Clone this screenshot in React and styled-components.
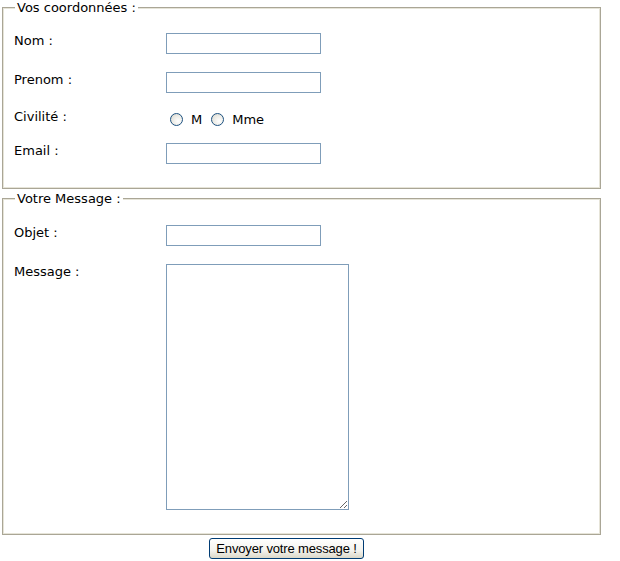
import React from 'react';
import styled, { createGlobalStyle } from 'styled-components';

const GlobalStyle = createGlobalStyle`
  body {
    margin: 0;
    background: #fff;
    font-family: "DejaVu Sans", Verdana, sans-serif;
    font-size: 13px;
    color: #000;
  }
`;

/* Form wrapper */
const Form = styled.form`
  width: 599px;
  margin: 0 2px;
`;

/* XP style fieldset: tan outer line with a lighter inner line */
const Fieldset = styled.fieldset`
  margin: ${(p) => (p.$first ? '0' : '2px')} 0 0;
  padding: ${(p) => p.$top || 18}px 11px 24px;
  border: 1px solid #aaa696;
  box-shadow: inset 1px 1px 0 #e6e4d8, inset -1px -1px 0 #e6e4d8;
  box-sizing: border-box;
`;

const Legend = styled.legend`
  padding: 0 2px;
  margin-left: 1px;
  background: #fff;
  line-height: 15px;
`;

/* One label + field line */
const Row = styled.div`
  display: flex;
  align-items: flex-start;
  margin-bottom: ${(p) => (p.$gap ?? 18)}px;
  &:last-child {
    margin-bottom: 0;
  }
`;

const Label = styled.label`
  width: 152px;
  flex-shrink: 0;
  line-height: 15px;
`;

const TextInput = styled.input`
  width: 155px;
  height: 21px;
  margin: 0;
  padding: 1px 2px;
  border: 1px solid #7f9db9;
  box-sizing: border-box;
  font-family: inherit;
  font-size: 13px;
  outline: none;
`;

const TextArea = styled.textarea`
  width: 183px;
  height: 246px;
  margin: 0;
  padding: 2px;
  border: 1px solid #7f9db9;
  box-sizing: border-box;
  font-family: inherit;
  font-size: 13px;
  outline: none;
`;

const RadioGroup = styled.div`
  display: flex;
  align-items: center;
  margin-top: 3px;
  line-height: 15px;
`;

const RadioLabel = styled.label`
  display: flex;
  align-items: center;
  margin-right: 5px;
`;

/* XP radio button */
const Radio = styled.input.attrs({ type: 'radio' })`
  appearance: none;
  width: 13px;
  height: 13px;
  margin: 0 8px 0 4px;
  border: 1px solid #1c5180;
  border-radius: 50%;
  background: radial-gradient(circle at 65% 65%, #fff 0%, #ebeae4 55%, #d6d2c6 100%);
  box-sizing: border-box;
`;

const Footer = styled.div`
  padding: 3px 0 0 207px;
`;

const SubmitButton = styled.button`
  width: 155px;
  height: 21px;
  padding: 0;
  border: 1px solid #003c74;
  border-radius: 3px;
  background: linear-gradient(#ffffff 0%, #f4f3ee 60%, #dcd8c8 100%);
  font-family: "Liberation Sans", Arial, sans-serif;
  font-size: 13px;
  letter-spacing: -0.15px;
  color: #000;
`;

export default function App() {
  return (
    <>
      <GlobalStyle />
      <Form onSubmit={(e) => e.preventDefault()}>
        <Fieldset $first>
          <Legend>Vos coordonnées :</Legend>
          <Row>
            <Label>Nom :</Label>
            <TextInput type="text" name="nom" />
          </Row>
          <Row $gap={16}>
            <Label>Prenom :</Label>
            <TextInput type="text" name="prenom" />
          </Row>
          <Row $gap={16}>
            <Label>Civilité :</Label>
            <RadioGroup>
              <RadioLabel>
                <Radio name="civilite" value="M" />M
              </RadioLabel>
              <RadioLabel>
                <Radio name="civilite" value="Mme" />Mme
              </RadioLabel>
            </RadioGroup>
          </Row>
          <Row>
            <Label>Email :</Label>
            <TextInput type="text" name="email" />
          </Row>
        </Fieldset>

        <Fieldset $top={19}>
          <Legend>Votre Message :</Legend>
          <Row>
            <Label>Objet :</Label>
            <TextInput type="text" name="objet" />
          </Row>
          <Row>
            <Label>Message :</Label>
            <TextArea name="message" />
          </Row>
        </Fieldset>

        <Footer>
          <SubmitButton type="submit">Envoyer votre message !</SubmitButton>
        </Footer>
      </Form>
    </>
  );
}
